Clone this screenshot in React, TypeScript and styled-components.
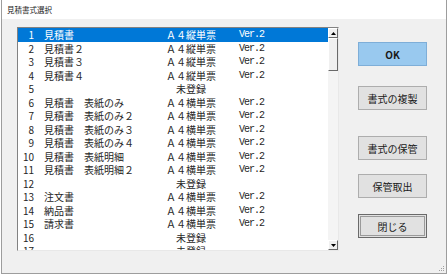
import React from "react";
import styled, { createGlobalStyle } from "styled-components";

const GlobalStyle = createGlobalStyle`
    html, body {
        margin: 0;
        padding: 0;
        background: #ffffff;
    }
    body {
        font-family: "Noto Sans CJK JP", "Noto Sans", sans-serif;
    }
`;

const FONT = `"Noto Sans CJK JP", "Noto Sans", sans-serif`;

const Window = styled.div`
    position: relative;
    box-sizing: border-box;
    margin-left: 1px;
    width: 446px;
    height: 274px;
    border-left: 1px solid #9d9d9d;
    border-right: 1px solid #9d9d9d;
    border-bottom: 1px solid #9d9d9d;
    display: flex;
    flex-direction: column;
`;

const TitleBar = styled.div`
    height: 19px;
    flex: none;
    background: #ffffff;
    display: flex;
    align-items: center;
    padding-left: 5px;
    font-family: ${FONT};
    font-size: 7.5px;
    color: #1a1a1a;
`;

const Body = styled.div`
    flex: 1;
    background: #f0f0f0;
    display: flex;
    padding: 8px 0 0 15px;
`;

const ListBox = styled.div`
    box-sizing: border-box;
    width: 322px;
    height: 224px;
    border-top: 1px solid #828282;
    border-left: 1px solid #828282;
    border-right: 1px solid #e8e8e8;
    border-bottom: 1px solid #e8e8e8;
    background: #ffffff;
    display: flex;
    overflow: hidden;
`;

const Rows = styled.div`
    flex: 1;
    overflow: hidden;
`;

const Row = styled.div<{ $selected?: boolean }>`
    display: grid;
    grid-template-columns: 16px 132px 50px 1fr;
    height: 13.5px;
    line-height: 13.5px;
    font-family: ${FONT};
    font-size: 10px;
    white-space: nowrap;
    color: ${(p) => (p.$selected ? "#ffffff" : "#262626")};
    background: ${(p) => (p.$selected ? "#0078d7" : "transparent")};
`;

const No = styled.span`
    text-align: right;
`;

const Name = styled.span`
    padding-left: 10px;
`;

const Kind = styled.span`
    text-align: center;
`;

const Ver = styled.span`
    padding-left: 23px;
    font-family: "Liberation Mono", monospace;
    font-size: 10px;
    letter-spacing: -1px;
`;

const ScrollBar = styled.div`
    width: 10px;
    flex: none;
    display: flex;
    flex-direction: column;
    background: #f4f4f4;
`;

const ScrollButton = styled.div<{ $height?: number }>`
    box-sizing: border-box;
    height: ${(p) => p.$height ?? 10}px;
    flex: none;
    background: #f0f0f0;
    border-top: 1px solid #ffffff;
    border-left: 1px solid #ffffff;
    border-right: 1px solid #696969;
    border-bottom: 1px solid #696969;
    display: flex;
    align-items: center;
    justify-content: center;
`;

const Track = styled.div`
    flex: 1;
`;

const ButtonColumn = styled.div`
    display: flex;
    flex-direction: column;
    margin-left: 19px;
    padding-top: 15px;
`;

const DialogButton = styled.button<{ $top: number; $primary?: boolean; $default?: boolean }>`
    box-sizing: border-box;
    width: 69px;
    height: 24px;
    margin-top: ${(p) => p.$top}px;
    padding: 0;
    font-family: ${FONT};
    font-size: 10px;
    font-weight: ${(p) => (p.$primary ? 700 : 400)};
    color: #1a1a1a;
    background: ${(p) => (p.$primary ? "#99c9ef" : "#e1e1e1")};
    border: 1px solid
        ${(p) => (p.$primary ? "#7eaed8" : p.$default ? "#6a6a6a" : "#adadad")};
    box-shadow: ${(p) =>
        p.$default ? "inset 0 0 0 1px #e1e1e1, inset 0 0 0 2px #9a9a9a" : "none"};
`;

const Grip = styled.svg`
    position: absolute;
    right: 1px;
    bottom: 1px;
`;

type Entry = { name: string; kind: string; ver: string };

const entries: Entry[] = [
    { name: "見積書", kind: "Ａ４縦単票", ver: "Ver.2" },
    { name: "見積書２", kind: "Ａ４縦単票", ver: "Ver.2" },
    { name: "見積書３", kind: "Ａ４縦単票", ver: "Ver.2" },
    { name: "見積書４", kind: "Ａ４縦単票", ver: "Ver.2" },
    { name: "", kind: "未登録", ver: "" },
    { name: "見積書　表紙のみ", kind: "Ａ４横単票", ver: "Ver.2" },
    { name: "見積書　表紙のみ２", kind: "Ａ４横単票", ver: "Ver.2" },
    { name: "見積書　表紙のみ３", kind: "Ａ４横単票", ver: "Ver.2" },
    { name: "見積書　表紙のみ４", kind: "Ａ４横単票", ver: "Ver.2" },
    { name: "見積書　表紙明細", kind: "Ａ４横単票", ver: "Ver.2" },
    { name: "見積書　表紙明細２", kind: "Ａ４横単票", ver: "Ver.2" },
    { name: "", kind: "未登録", ver: "" },
    { name: "注文書", kind: "Ａ４横単票", ver: "Ver.2" },
    { name: "納品書", kind: "Ａ４横単票", ver: "Ver.2" },
    { name: "請求書", kind: "Ａ４横単票", ver: "Ver.2" },
    { name: "", kind: "未登録", ver: "" },
    { name: "", kind: "未登録", ver: "" },
];

function Arrow({ down }: { down?: boolean }) {
    return (
        <svg width="5" height="3" viewBox="0 0 5 3">
            <path d={down ? "M0 0H5L2.5 3Z" : "M0 3H5L2.5 0Z"} fill="#000" />
        </svg>
    );
}

export default function App() {
    return (
        <>
            <GlobalStyle />
            <Window>
                <TitleBar>見積書式選択</TitleBar>
                <Body>
                    <ListBox>
                        <Rows>
                            {entries.map((e, i) => (
                                <Row key={i} $selected={i === 0}>
                                    <No>{i + 1}</No>
                                    <Name>{e.name}</Name>
                                    <Kind>{e.kind}</Kind>
                                    <Ver>{e.ver}</Ver>
                                </Row>
                            ))}
                        </Rows>
                        <ScrollBar>
                            <ScrollButton>
                                <Arrow />
                            </ScrollButton>
                            <ScrollButton $height={33} />
                            <Track />
                            <ScrollButton>
                                <Arrow down />
                            </ScrollButton>
                        </ScrollBar>
                    </ListBox>
                    <ButtonColumn>
                        <DialogButton $top={0} $primary>
                            OK
                        </DialogButton>
                        <DialogButton $top={20}>書式の複製</DialogButton>
                        <DialogButton $top={26}>書式の保管</DialogButton>
                        <DialogButton $top={14}>保管取出</DialogButton>
                        <DialogButton $top={16} $default>
                            閉じる
                        </DialogButton>
                    </ButtonColumn>
                </Body>
                <Grip width="8" height="8" viewBox="0 0 8 8">
                    <rect x="6" y="2" width="1" height="1" fill="#a0a0a0" />
                    <rect x="4" y="4" width="1" height="1" fill="#a0a0a0" />
                    <rect x="6" y="4" width="1" height="1" fill="#a0a0a0" />
                    <rect x="2" y="6" width="1" height="1" fill="#a0a0a0" />
                    <rect x="4" y="6" width="1" height="1" fill="#a0a0a0" />
                    <rect x="6" y="6" width="1" height="1" fill="#a0a0a0" />
                </Grip>
            </Window>
        </>
    );
}
